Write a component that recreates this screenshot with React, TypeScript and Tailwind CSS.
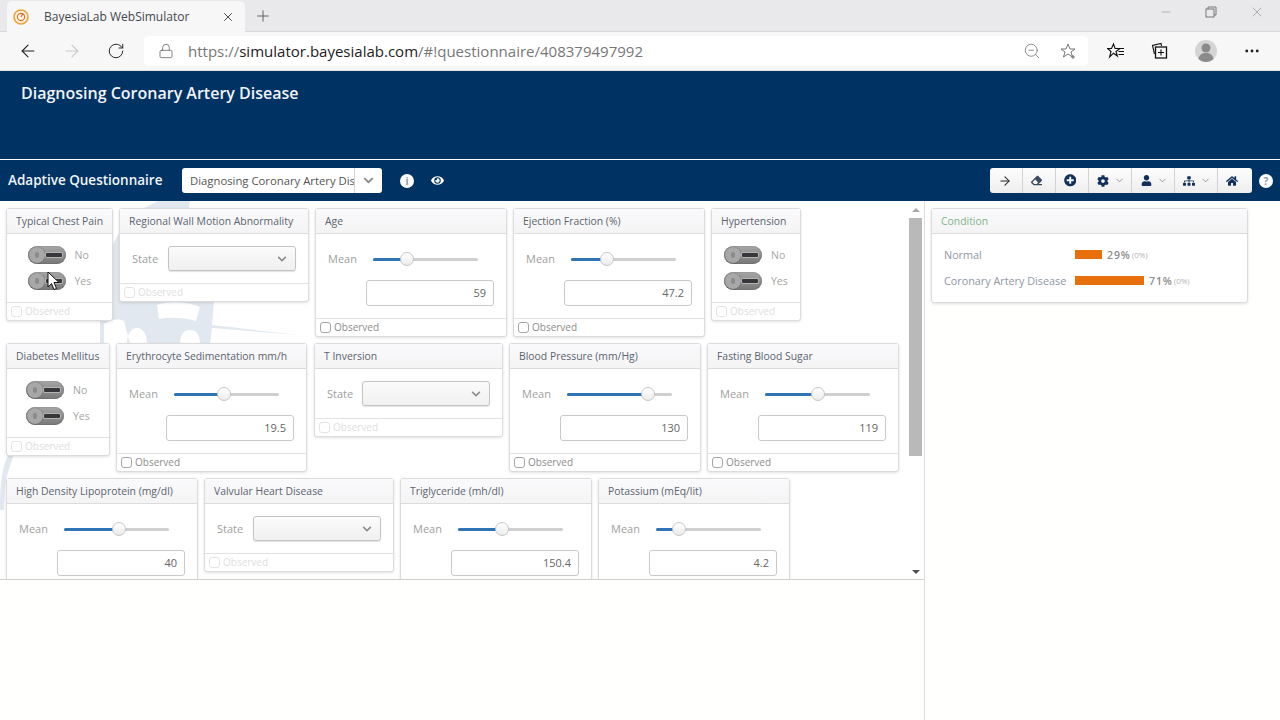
import React from "react";
import { FaChevronDown, FaEraser, FaPlusCircle, FaCog, FaUser, FaSitemap, FaHome, FaEye } from "react-icons/fa";
import { ArrowRight, ChevronDown, ArrowLeft, Lock, RotateCw, ZoomOut, Plus, X, Minus, MoreHorizontal } from "lucide-react";

const font = { fontFamily: '"Open Sans", "Noto Sans", sans-serif' };

function Panel({ title, w, children, active }: { title: string; w: string; children: React.ReactNode; active?: boolean }) {
  return (
    <div className={`${w} shrink-0 rounded-[3px] border border-[#dcdcdc] bg-white shadow-[0_1px_3px_rgba(0,0,0,0.12)]`}>
      <div className="flex h-[25px] items-center border-b border-[#dcdcdc] bg-gradient-to-b from-[#fafafc] to-[#f4f4f5] pt-[1px] pl-[9px] text-[10.4px] whitespace-nowrap text-[#5b6470]">{title}</div>
      {children}
      <div className={`flex h-[18px] items-center gap-[3px] border-t border-[#e2e2e2] pl-[4px] text-[10px] ${active ? "text-[#8c8c8c]" : "text-[#dedede]"}`}>
        <span className={`h-[11px] w-[11px] rounded-[3px] border bg-white ${active ? "border-[#a5a5a5]" : "border-[#e4e4e4]"}`} />
        Observed
      </div>
    </div>
  );
}

function Switch() {
  return (
    <div className="flex h-[18px] w-[38px] items-center rounded-full bg-gradient-to-b from-[#a6a6a6] to-[#787878] pl-[1px] shadow-[inset_0_0_1px_rgba(0,0,0,0.6)]">
      <div className="flex h-[16px] w-[16px] items-center justify-center rounded-full bg-[#a8a8a8] shadow-[0_0_1px_rgba(0,0,0,0.5)]">
        <div className="h-[6px] w-[4px] rounded-full bg-[#8b8b8b]" />
      </div>
      <div className="ml-[1px] h-[4px] w-[16px] rounded-[1px] bg-[#35373a] ring-1 ring-[#b4b4b4]" />
    </div>
  );
}

function SwitchPanel({ title, w }: { title: string; w: string }) {
  return (
    <Panel title={title} w={w}>
      <div className="flex h-[68px] justify-center pt-[12px]">
        <div className="flex flex-col gap-[8px]">
          {["No", "Yes"].map((l) => (
            <div key={l} className="flex h-[18px] items-center gap-[9px] text-[10.5px] text-[#a5a5a5]">
              <Switch />
              <span className="w-[17px] pt-[1px]">{l}</span>
            </div>
          ))}
        </div>
      </div>
    </Panel>
  );
}

function SelectPanel({ title, w, tight }: { title: string; w: string; tight?: boolean }) {
  return (
    <Panel title={title} w={w}>
      <div className="flex h-[49px] items-start pl-[12px] pt-[12px]">
        <span className={`flex h-[25px] ${tight ? "w-[35px]" : "w-[36px]"} items-center pt-[1px] text-[11px] text-[#a0a0a0]`}>State</span>
        <div className="flex h-[25px] w-[128px] items-center justify-end rounded-[3px] border border-[#c4c4c4] bg-gradient-to-b from-[#fbfbfb] to-[#f0f0f0] pr-[8px] shadow-[0_1px_1px_rgba(0,0,0,0.12)]">
          <FaChevronDown className="text-[10px] text-[#8d8d8d]" />
        </div>
      </div>
    </Panel>
  );
}

function SliderPanel({ title, w, fill, value }: { title: string; w: string; fill: number; value: string }) {
  return (
    <Panel title={title} w={w} active>
      <div className="flex h-[84px] flex-col pr-[12px] pl-[12px]">
        <div className="flex h-[25px] items-center pt-[25px]">
          <span className="w-[45px] text-[11px] text-[#a0a0a0]">Mean</span>
          <div className="relative h-[3px] w-[105px] rounded-full bg-[#cfcfcf]">
            <div className="h-full rounded-l-full bg-[#2f75b5]" style={{ width: fill }} />
            <div className="absolute top-[-6px] h-[14px] w-[14px] rounded-full border border-[#c6c6c6] bg-gradient-to-b from-[#ffffff] to-[#ececec]" style={{ left: fill - 7 }} />
          </div>
        </div>
        <div className="mt-[21px] ml-auto flex h-[26px] w-[128px] items-center justify-end rounded-[3px] border border-[#c9c9c9] bg-white pr-[7px] text-[11px] text-[#666]">{value}</div>
      </div>
    </Panel>
  );
}

function ToolBtn({ w, children, chevron, last, pad }: { w: string; children: React.ReactNode; chevron?: boolean; last?: boolean; pad?: string }) {
  return (
    <div className={`flex ${w} ${pad ?? ""} items-center justify-center gap-[5px] ${last ? "" : "border-r border-[#d2d2d2]"} text-[#12305a]`}>
      {children}
      {chevron && <ChevronDown size={11} className="text-[#8b929b]" strokeWidth={2} />}
    </div>
  );
}

function Dot({ c, cls }: { c: string; cls: string }) {
  return <span className={`flex h-[14px] w-[14px] items-center justify-center rounded-full bg-white text-[10px] leading-none font-bold text-[#8c99ab] ${cls}`}>{c}</span>;
}

export default function App() {
  return (
    <div className="relative flex h-[720px] w-[1280px] flex-col overflow-hidden bg-white" style={font}>
      {/* tab strip */}
      <div className="relative flex h-[32px] items-end border-b border-[#d8d8d8] bg-[#e9e9eb] pl-[7px]">
        <div className="flex h-[31px] w-[238px] items-center rounded-t-[5px] bg-[#f7f7f7] pl-[6px] text-[12px] text-[#44474d]" style={{ marginBottom: -1 }}>
          <svg width="16" height="16" viewBox="0 0 16 16">
            <circle cx="8" cy="8" r="7" fill="#fff3dd" stroke="#eda23a" strokeWidth="1.6" />
            <circle cx="8" cy="8" r="3.6" fill="none" stroke="#c9763b" strokeWidth="1.1" />
            <path d="M8 8 L10 4.5" stroke="#d9513a" strokeWidth="1.1" />
          </svg>
          <span className="ml-[15px] w-[177px] whitespace-nowrap">BayesiaLab WebSimulator</span>
          <X size={14} className="text-[#333]" strokeWidth={1.5} />
        </div>
        <Plus size={18} className="mb-[6px] ml-[9px] text-[#555]" strokeWidth={1.2} />
        <div className="mr-[15px] mb-[11px] ml-auto flex items-center gap-[32px] text-[#8f8f8f]">
          <Minus size={14} strokeWidth={1} />
          <svg width="12" height="12" viewBox="0 0 12 12" fill="none" stroke="#777" strokeWidth="1"><rect x="1" y="3" width="8" height="8" /><path d="M3 3V1h8v8H9" /></svg>
          <X size={16} strokeWidth={1} />
        </div>
      </div>
      {/* toolbar */}
      <div className="flex h-[39px] items-center border-b border-[#e2e2e2] bg-[#f7f7f7] text-[#222]">
        <div className="flex w-[144px] items-center pl-[18px]">
          <ArrowLeft size={20} strokeWidth={1.3} />
          <ArrowLeft size={20} strokeWidth={1.3} className="ml-[24px] rotate-180 text-[#c9c9c9]" />
          <RotateCw size={18} strokeWidth={1.3} className="ml-[25px]" />
        </div>
        <div className="flex h-[30px] w-[944px] items-center rounded-[4px] bg-white pl-[14px] text-[#777]">
          <Lock size={16} strokeWidth={1.2} className="text-[#666]" />
          <span className="ml-[14px] text-[15.02px] whitespace-nowrap">
            https://<span className="text-[#222]">simulator.bayesialab.com</span>/#!questionnaire/408379497992
          </span>
          <div className="ml-auto flex items-center gap-[19px] pr-[10px]">
            <ZoomOut size={18} strokeWidth={1.1} className="text-[#777]" />
            <svg width="18" height="18" viewBox="0 0 18 18" fill="none" stroke="#777" strokeWidth="1"><path d="M8 2l2 5h5l-4 3 1.500 5L8 12l-4.500 3L5 10 1 7h5z" /><path d="M13 13v4M11 15h4" /></svg>
          </div>
        </div>
        <div className="flex flex-1 items-center pl-[19px]">
          <svg width="18" height="18" viewBox="0 0 18 18" fill="none" stroke="#111" strokeWidth="1.1"><path d="M6.500 2l1.600 4.500H13L9 9.500l1.400 4.500-3.900-2.800L2.600 15 4 9.500 0.500 6.500h4z" /><path d="M11 6.500h6M11.500 9.500h5.500M11.500 12.500h5.500" /></svg>
          <svg width="18" height="18" viewBox="0 0 18 18" fill="none" stroke="#111" strokeWidth="1.1" className="ml-[26px]"><path d="M3.500 12L1.500 3.500 10 1.500l.5 2.500" /><rect x="4.500" y="5" width="11" height="11" strokeWidth="1.3" /><path d="M10 7.500v6M7 10.500h6" /></svg>
          <svg width="22" height="22" viewBox="0 0 22 22" className="ml-[26px]">
            <circle cx="11" cy="11" r="11" fill="#d4d4d4" />
            <circle cx="11" cy="8" r="4.500" fill="#8b8b8b" />
            <path d="M3.500 19c1-5 4-6 7.500-6s6.500 1 7.500 6c-2 2-5 3-7.500 3s-5.500-1-7.500-3z" fill="#8b8b8b" />
          </svg>
          <MoreHorizontal size={18} strokeWidth={1.8} className="ml-[26px]" />
        </div>
      </div>
      {/* header */}
      <div className="h-[89px] border-b border-white bg-[#003263] pt-[11px] pl-[21px] text-[16px] leading-[22px] font-semibold text-[#f1f4f7]">Diagnosing Coronary Artery Disease</div>
      <div className="flex h-[41px] items-center bg-[#003263] pl-[8px]">
        <span className="w-[174px] text-[13.5px] font-semibold whitespace-nowrap text-[#f1f4f7]">Adaptive Questionnaire</span>
        <div className="flex h-[25px] w-[200px] items-center rounded-[3px] bg-white text-[11.3px] text-[#555]">
          <span className="w-[173px] overflow-hidden border-r border-[#d2d2d2] pl-[8px] leading-[25px] whitespace-nowrap">Diagnosing Coronary Artery Disease</span>
          <FaChevronDown className="ml-[8px] text-[11px] text-[#8a8a8a]" />
        </div>
        <Dot c="i" cls="ml-[18px]" />
        <FaEye className="ml-[17px] text-[13px] text-white" />
        <div className="mr-[7px] ml-auto flex items-center">
          <div className="flex h-[25px] w-[262px] rounded-[3px] bg-gradient-to-b from-[#fdfdfd] to-[#eeeeee]">
            <ToolBtn w="w-[33px]" pad="pr-[2px]"><ArrowRight size={14} strokeWidth={1.8} className="text-[#222]" /></ToolBtn>
            <ToolBtn w="w-[33px]" pad="pr-[5px]"><FaEraser className="text-[11px] text-[#3a4a63]" /></ToolBtn>
            <ToolBtn w="w-[33px]" pad="pr-[4px]"><FaPlusCircle className="text-[12.5px]" /></ToolBtn>
            <ToolBtn w="w-[43px]" chevron pad="pl-[2px]"><FaCog className="text-[12px]" /></ToolBtn>
            <ToolBtn w="w-[43px]" chevron pad="pl-[2px]"><FaUser className="text-[11px]" /></ToolBtn>
            <ToolBtn w="w-[43px]" chevron pad="pl-[2px]"><FaSitemap className="text-[12px]" /></ToolBtn>
            <ToolBtn w="w-[34px]" last pad="pr-[6px]"><FaHome className="text-[12px]" /></ToolBtn>
          </div>
          <Dot c="?" cls="ml-[7px]" />
        </div>
      </div>
      {/* main */}
      <div className="flex flex-1">
        <div className="flex w-[925px] flex-col border-r border-[#dcdcdc]">
          <div className="relative flex h-[378px] bg-white">
            <svg className="absolute top-0 left-0 h-[378px] w-[907px]" viewBox="0 201 907 378" fill="#e1e8ef">
              <path fillRule="evenodd" d="M100 344V300c4-40 14-70 40-90l20-10h30c-5 30 10 60 24 100l-2 25 86 10-86-7-2 16z M104 344v-20c6-4 14-6 20-3l6 23z M127 344c0-10 4-16 10-16s10 6 10 16z M180 344c0-10 4-14 10-14s10 4 10 14z M157 305c10-4 30-4 43 2l-4 14c-12-4-28-4-37-2z" />
              <path d="M0 510c0-30 3-50 12-60l4-4c-4 16-9 26-11 40l-1 24z" />
            </svg>
            <div className="relative flex flex-1 flex-col gap-[6px] overflow-hidden pt-[7px] pl-[6px]">
              <div className="flex h-[129px] shrink-0 items-start gap-[6px]">
                <SwitchPanel title="Typical Chest Pain" w="w-[107px]" />
                <SelectPanel title="Regional Wall Motion Abnormality" w="w-[190px]" />
                <SliderPanel title="Age" w="w-[192px]" fill={34} value="59" />
                <SliderPanel title="Ejection Fraction (%)" w="w-[192px]" fill={36} value="47.2" />
                <SwitchPanel title="Hypertension" w="w-[90px]" />
              </div>
              <div className="flex h-[129px] shrink-0 items-start gap-[6px]">
                <SwitchPanel title="Diabetes Mellitus" w="w-[104px]" />
                <SliderPanel title="Erythrocyte Sedimentation mm/h" w="w-[191px]" fill={50} value="19.5" />
                <SelectPanel title="T Inversion" w="ml-[1px] w-[189px]" tight />
                <SliderPanel title="Blood Pressure (mm/Hg)" w="w-[192px]" fill={81} value="130" />
                <SliderPanel title="Fasting Blood Sugar" w="w-[192px]" fill={53} value="119" />
              </div>
              <div className="flex h-[129px] shrink-0 items-start gap-[6px]">
                <SliderPanel title="High Density Lipoprotein (mg/dl)" w="w-[192px]" fill={55} value="40" />
                <SelectPanel title="Valvular Heart Disease" w="w-[190px]" />
                <SliderPanel title="Triglyceride (mh/dl)" w="w-[192px]" fill={44} value="150.4" />
                <SliderPanel title="Potassium (mEq/lit)" w="w-[192px]" fill={23} value="4.2" />
              </div>
            </div>
            <div className="relative flex w-[17px] flex-col items-center bg-white">
              <div className="mt-[7px] h-0 w-0 border-x-[4px] border-b-[4px] border-x-transparent border-b-[#a8a8a8]" />
              <div className="mt-[6px] h-[238px] w-[13px] bg-[#b9b9b9]" />
              <div className="mt-auto mb-[5px] h-0 w-0 border-x-[4px] border-t-[4px] border-x-transparent border-t-[#505050]" />
            </div>
          </div>
          <div className="flex-1 border-t border-[#cfcfcf] bg-[#fffffd]" />
        </div>
        <div className="flex-1 bg-[#fffffd] pt-[7px] pl-[6px]">
          <div className="h-[95px] w-[317px] rounded-[3px] border border-[#dcdcdc] bg-white shadow-[0_1px_3px_rgba(0,0,0,0.12)]">
            <div className="flex h-[25px] items-center border-b border-[#dcdcdc] bg-gradient-to-b from-[#fafafc] to-[#f4f4f5] pt-[1px] pl-[9px] text-[10.4px] text-[#7fb488]">Condition</div>
            <div className="flex flex-col gap-[16px] pt-[15px] pl-[12px] text-[10.8px] leading-[10px] whitespace-nowrap text-[#8e97a3]">
              <div className="flex h-[10px] items-center">
                <span className="w-[131px] pt-[2px]">Normal</span>
                <div className="h-[9px] w-[27px] bg-[#e8700c]" />
                <span className="ml-[5px] pt-[2px] text-[10.5px] font-semibold tracking-[0.9px] text-[#8d8d8d]">29%</span>
                <span className="ml-[1px] pt-[2px] text-[8px] text-[#b5b5b5]">(0%)</span>
              </div>
              <div className="flex h-[10px] items-center">
                <span className="w-[131px] pt-[2px]">Coronary Artery Disease</span>
                <div className="h-[9px] w-[69px] bg-[#e8700c]" />
                <span className="ml-[5px] pt-[2px] text-[10.5px] font-semibold tracking-[0.9px] text-[#8d8d8d]">71%</span>
                <span className="ml-[1px] pt-[2px] text-[8px] text-[#b5b5b5]">(0%)</span>
              </div>
            </div>
          </div>
        </div>
      </div>
      <svg className="absolute top-[271px] left-[47px]" width="14" height="20" viewBox="0 0 14 20">
        <path d="M1 1v15l3.500-3.500 2.500 6 2.500-1-2.500-6h5z" fill="#fff" stroke="#111" strokeWidth="1" />
      </svg>
    </div>
  );
}
